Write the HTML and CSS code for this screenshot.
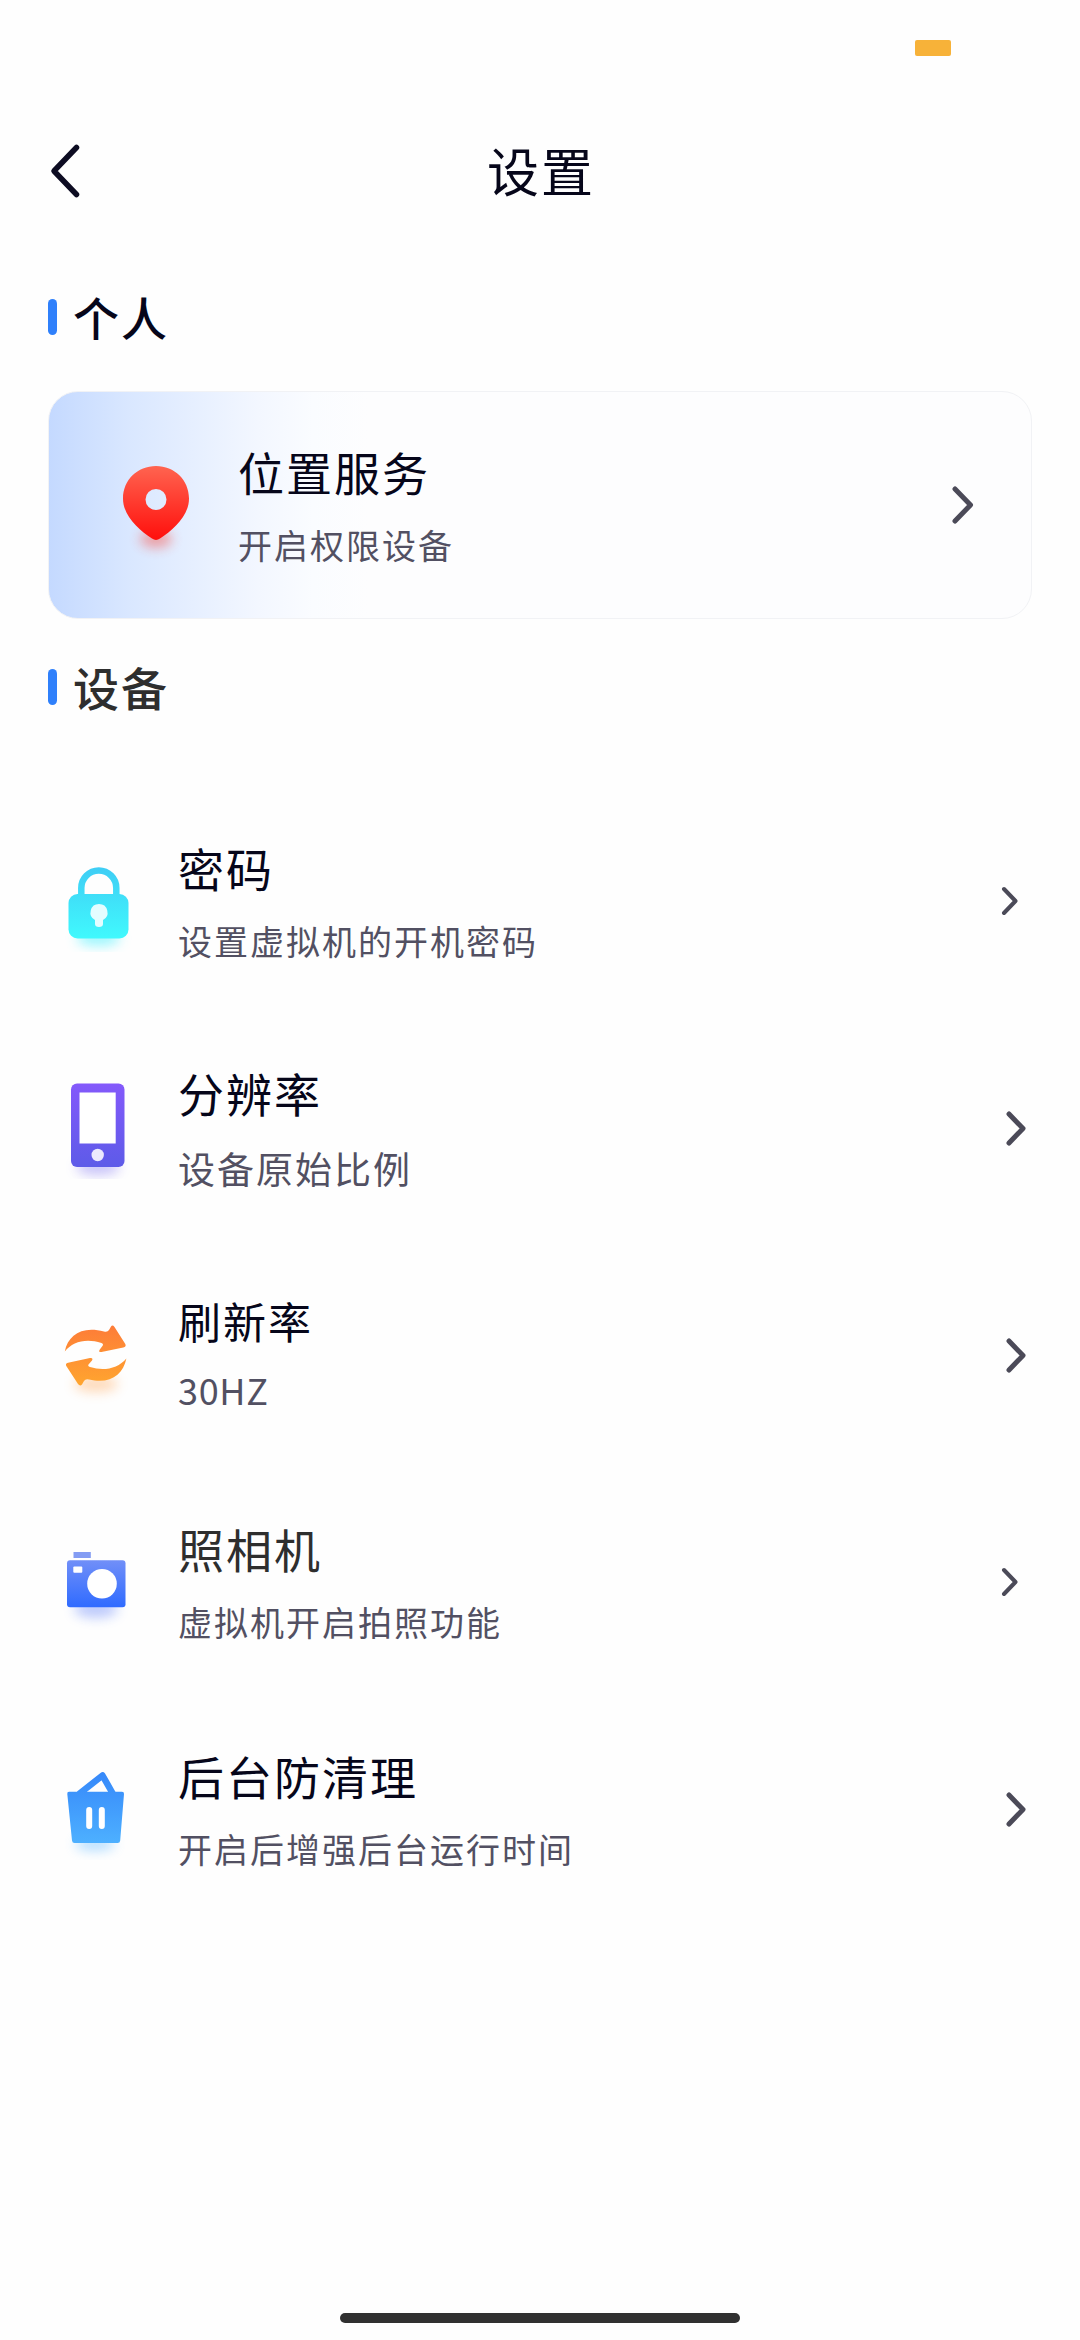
FILE: index.html
```html
<!DOCTYPE html>
<html lang="zh-CN">
<head>
<meta charset="utf-8">
<title>设置</title>
<link rel="stylesheet" href="styles.css">
</head>
<body>
<div class="screen">
  <div class="status"><span class="status-pill"></span></div>
  <header class="header">
    <svg class="back" viewBox="48 140 36 62"><path d="M76.500 147.500L54 171L76.500 194.500"/></svg>
    <h1 class="title">设置</h1>
  </header>

  <h2 class="section"><i class="bar"></i><span class="label">个人</span></h2>
  <div class="card">
    <svg class="pin" viewBox="110 455 92 110">
      <defs>
        <linearGradient id="g-pin" x1="0" y1="0" x2="0" y2="1"><stop offset="0" stop-color="#ff6450"/><stop offset="1" stop-color="#ff0f0c"/></linearGradient>
        <filter id="soft" x="-50%" y="-150%" width="200%" height="400%"><feGaussianBlur stdDeviation="6"/></filter>
      </defs>
      <ellipse cx="156" cy="539" rx="16" ry="9" fill="#ff3020" opacity=".4" filter="url(#soft)"/>
      <path fill="url(#g-pin)" fill-rule="evenodd" d="M156 466C137.500 466 123 480 123 498.500C123 516 139 530 152 538.600Q156 541.200 160 538.600C173 530 189 516 189 498.500C189 480 174.500 466 156 466ZM156 489a10.500 10.500 0 1 0 0 21a10.500 10.500 0 1 0 0-21Z"/>
    </svg>
    <div class="text">
      <div class="name">位置服务</div>
      <div class="desc">开启权限设备</div>
    </div>
    <svg class="chev large" viewBox="0 0 22 38"><path d="M3 3L18.500 19L3 35"/></svg>
  </div>

  <h2 class="section section-device"><i class="bar"></i><span class="label">设备</span></h2>
  <div class="list">
    <div class="row">
      <svg class="icon" viewBox="56 850 84 102">
        <defs><linearGradient id="g-lock" gradientUnits="userSpaceOnUse" x1="0" y1="867" x2="0" y2="938"><stop offset="0" stop-color="#3fcdf5"/><stop offset="1" stop-color="#40f9fd"/></linearGradient></defs>
        <ellipse cx="98.500" cy="938" rx="22" ry="8" fill="#40effd" opacity=".5" filter="url(#soft)"/>
        <path d="M81.300 898V888a17.500 17.500 0 0 1 35 0V898" fill="none" stroke="url(#g-lock)" stroke-width="6.500"/>
        <rect x="68.500" y="894" width="60" height="44.500" rx="9" fill="url(#g-lock)"/>
        <path d="M99 904a8.500 8.500 0 0 1 4 16V924q0 3-4 3t-4-3V920A8.500 8.500 0 0 1 99 904Z" fill="#e4fdff"/>
      </svg>
      <div class="text"><div class="name">密码</div><div class="desc">设置虚拟机的开机密码</div></div>
      <svg class="chev small" viewBox="0 0 18 30"><path d="M3 3L14.500 15L3 27"/></svg>
    </div>
    <div class="row">
      <svg class="icon" viewBox="56 1077 84 102">
        <defs><linearGradient id="g-phone" x1="0" y1="0" x2="0" y2="1"><stop offset="0" stop-color="#8459fb"/><stop offset="1" stop-color="#5d5be8"/></linearGradient></defs>
        <ellipse cx="98" cy="1167" rx="22" ry="8" fill="#6a5bf0" opacity=".36" filter="url(#soft)"/>
        <rect x="71" y="1083.500" width="53.500" height="83.500" rx="6" fill="url(#g-phone)"/>
        <path d="M79.500 1092.500H115.700V1143.500H79.500Z" fill="#fff"/>
        <circle cx="97.700" cy="1155" r="6.200" fill="#eceafd"/>
      </svg>
      <div class="text text-resolution"><div class="name">分辨率</div><div class="desc desc-big">设备原始比例</div></div>
      <svg class="chev" viewBox="0 0 20 35"><path d="M3 3L17 17.500L3 32"/></svg>
    </div>
    <div class="row">
      <svg class="icon" viewBox="56 1304 84 102">
        <defs><linearGradient id="g-sync" gradientUnits="userSpaceOnUse" x1="0" y1="1326" x2="0" y2="1385"><stop offset="0" stop-color="#fd7c38"/><stop offset="1" stop-color="#ffa52f"/></linearGradient></defs>
        <ellipse cx="96" cy="1384" rx="22" ry="8" fill="#ff9a40" opacity=".36" filter="url(#soft)"/>
        <g fill="url(#g-sync)">
          <path d="M64.800 1351.500C68 1335 82 1325.500 104 1331.500Q107.500 1332.500 109 1330L111 1326.500Q112.500 1324.500 114.500 1327L125.300 1344Q126.600 1346.600 123.300 1347.400L101.500 1352Q98 1352.500 99.800 1349.500L102.800 1345.500Q103.800 1343.800 101.500 1342.900C86 1338 72.500 1341.500 64.800 1351.500Z"/>
          <path d="M126.400 1358.500C123 1375 110 1384.500 89 1379.500Q85.500 1378.500 84 1381L82 1384.500Q80 1386.500 78 1384L66.300 1366Q65 1363.500 68 1362.700L90 1358Q93.500 1357.500 92 1360.500L88.500 1364.500Q87.500 1366.200 90 1367.100C104 1371.500 118 1368.500 126.400 1358.500Z"/>
        </g>
      </svg>
      <div class="text text-refresh"><div class="name name-small">刷新率</div><div class="desc desc-latin">30HZ</div></div>
      <svg class="chev" viewBox="0 0 20 35"><path d="M3 3L17 17.500L3 32"/></svg>
    </div>
    <div class="row">
      <svg class="icon" viewBox="56 1531 84 102">
        <defs><linearGradient id="g-cam" x1="0" y1="0" x2="0" y2="1"><stop offset="0" stop-color="#718ff8"/><stop offset="1" stop-color="#2f6bff"/></linearGradient></defs>
        <ellipse cx="96" cy="1609" rx="22" ry="9" fill="#4a6ef8" opacity=".36" filter="url(#soft)"/>
        <rect x="73.500" y="1552" width="17.300" height="6" fill="#839cf3"/>
        <rect x="67" y="1560.300" width="58.500" height="47" rx="3" fill="url(#g-cam)"/>
        <rect x="73.300" y="1566.500" width="9" height="6.200" rx="1" fill="#fff"/>
        <circle cx="102" cy="1583.700" r="14.800" fill="#fff"/>
      </svg>
      <div class="text"><div class="name dark">照相机</div><div class="desc">虚拟机开启拍照功能</div></div>
      <svg class="chev small" viewBox="0 0 18 30"><path d="M3 3L14.500 15L3 27"/></svg>
    </div>
    <div class="row">
      <svg class="icon" viewBox="56 1758 84 102">
        <defs><linearGradient id="g-bin" gradientUnits="userSpaceOnUse" x1="0" y1="1772" x2="0" y2="1843"><stop offset="0" stop-color="#3688fa"/><stop offset="1" stop-color="#4db0ff"/></linearGradient></defs>
        <ellipse cx="95" cy="1844" rx="20" ry="7" fill="#4db0ff" opacity=".4" filter="url(#soft)"/>
        <path d="M79 1794L102.500 1775.500L113 1794" fill="none" stroke="url(#g-bin)" stroke-width="6.500" stroke-linejoin="round"/>
        <path d="M69 1791.700H122Q124.200 1791.700 124 1794L120.200 1840.500Q120 1843 117.500 1843H74.500Q72.300 1843 72 1840.500L67.300 1794Q67 1791.700 69 1791.700Z" fill="url(#g-bin)"/>
        <path d="M89.200 1810V1826M101.800 1810V1826" stroke="#fff" stroke-width="6" stroke-linecap="round"/>
      </svg>
      <div class="text"><div class="name">后台防清理</div><div class="desc">开启后增强后台运行时间</div></div>
      <svg class="chev" viewBox="0 0 20 35"><path d="M3 3L17 17.500L3 32"/></svg>
    </div>
  </div>
  <div class="home"></div>
</div>
</body>
</html>
```
FILE: styles.css
```css
* { box-sizing: border-box; }
body {
  margin: 0;
  background: #fefefe;
  font-family: "Noto Sans CJK SC", sans-serif;
  color: #06061a;
}
.screen {
  width: 1080px;
  height: 2340px;
  display: flex;
  flex-direction: column;
}
svg { display: block; flex: none; }
.status {
  height: 88px;
  padding: 40px 129px 0 0;
  display: flex;
  justify-content: flex-end;
}
.status-pill { width: 36px; height: 16px; border-radius: 2px; background: #f7b239; }
.header {
  height: 164px;
  padding: 0 48px;
  display: grid;
  grid-template-columns: 36px 1fr 36px;
  align-items: center;
}
.back { width: 36px; height: 62px; margin-top: 2px; }
.back path { fill: none; stroke: #0d0c22; stroke-width: 5.5; stroke-linecap: round; stroke-linejoin: round; }
.title {
  margin: 0;
  font-size: 52px;
  font-weight: 400;
  line-height: 80px;
  letter-spacing: 2px;
  padding-left: 2px;
  text-align: center;
}
.section {
  margin: 35px 0 0 48px;
  height: 60px;
  display: flex;
  align-items: center;
  gap: 16px;
  font-size: 46px;
  font-weight: 500;
  line-height: 60px;
  letter-spacing: 2px;
}
.label { margin-top: -3px; }
.section-device { margin-top: 38px; color: #2e2e2e; }
.bar { width: 9px; height: 36px; border-radius: 4.5px; background: #2f80fb; }
.card {
  margin: 44px 48px 0;
  height: 228px;
  padding: 0 57px 0 62px;
  display: flex;
  align-items: center;
  border: 1px solid #f1f2f5;
  border-radius: 30px;
  background: linear-gradient(90deg, #c4d9ff 0, #d9e7ff 80px, #e6efff 145px, #f3f7ff 210px, #fafcff 265px, #fdfdfe 320px) border-box;
}
.pin { width: 92px; height: 110px; margin: 10px 36px 0 -1px; }
.text { flex: 1; display: flex; flex-direction: column; gap: 22px; margin-top: -2px; }
.text-resolution { gap: 24px; margin-top: -3px; }
.text-refresh { gap: 17px; margin-top: -9px; }
.name { font-size: 46px; line-height: 60px; letter-spacing: 2px; }
.name-small { font-size: 43px; }
.dark { color: #2e2e2e; }
.desc { font-size: 34px; line-height: 44px; letter-spacing: 2px; color: #525062; }
.desc-big { font-size: 37px; }
.desc-latin { font-size: 36px; letter-spacing: 0.7px; }
.list { margin-top: 70px; display: flex; flex-direction: column; }
.row {
  height: 227px;
  padding: 0 54px 0 56px;
  display: flex;
  align-items: center;
}
.icon { width: 84px; height: 102px; margin-right: 38px; }
.chev { width: 20px; height: 35px; margin-top: 1px; }
.chev.small { width: 18px; height: 30px; margin-right: 7px; margin-top: 0; }
.chev.large { width: 22px; height: 38px; margin-top: 0; }
.chev path { fill: none; stroke: #4b4a58; stroke-width: 5; stroke-linecap: round; stroke-linejoin: round; }
.chev.small path { stroke-width: 4; }
.home { width: 400px; height: 10px; margin: auto auto 17px; border-radius: 5px; background: #303030; }
```
